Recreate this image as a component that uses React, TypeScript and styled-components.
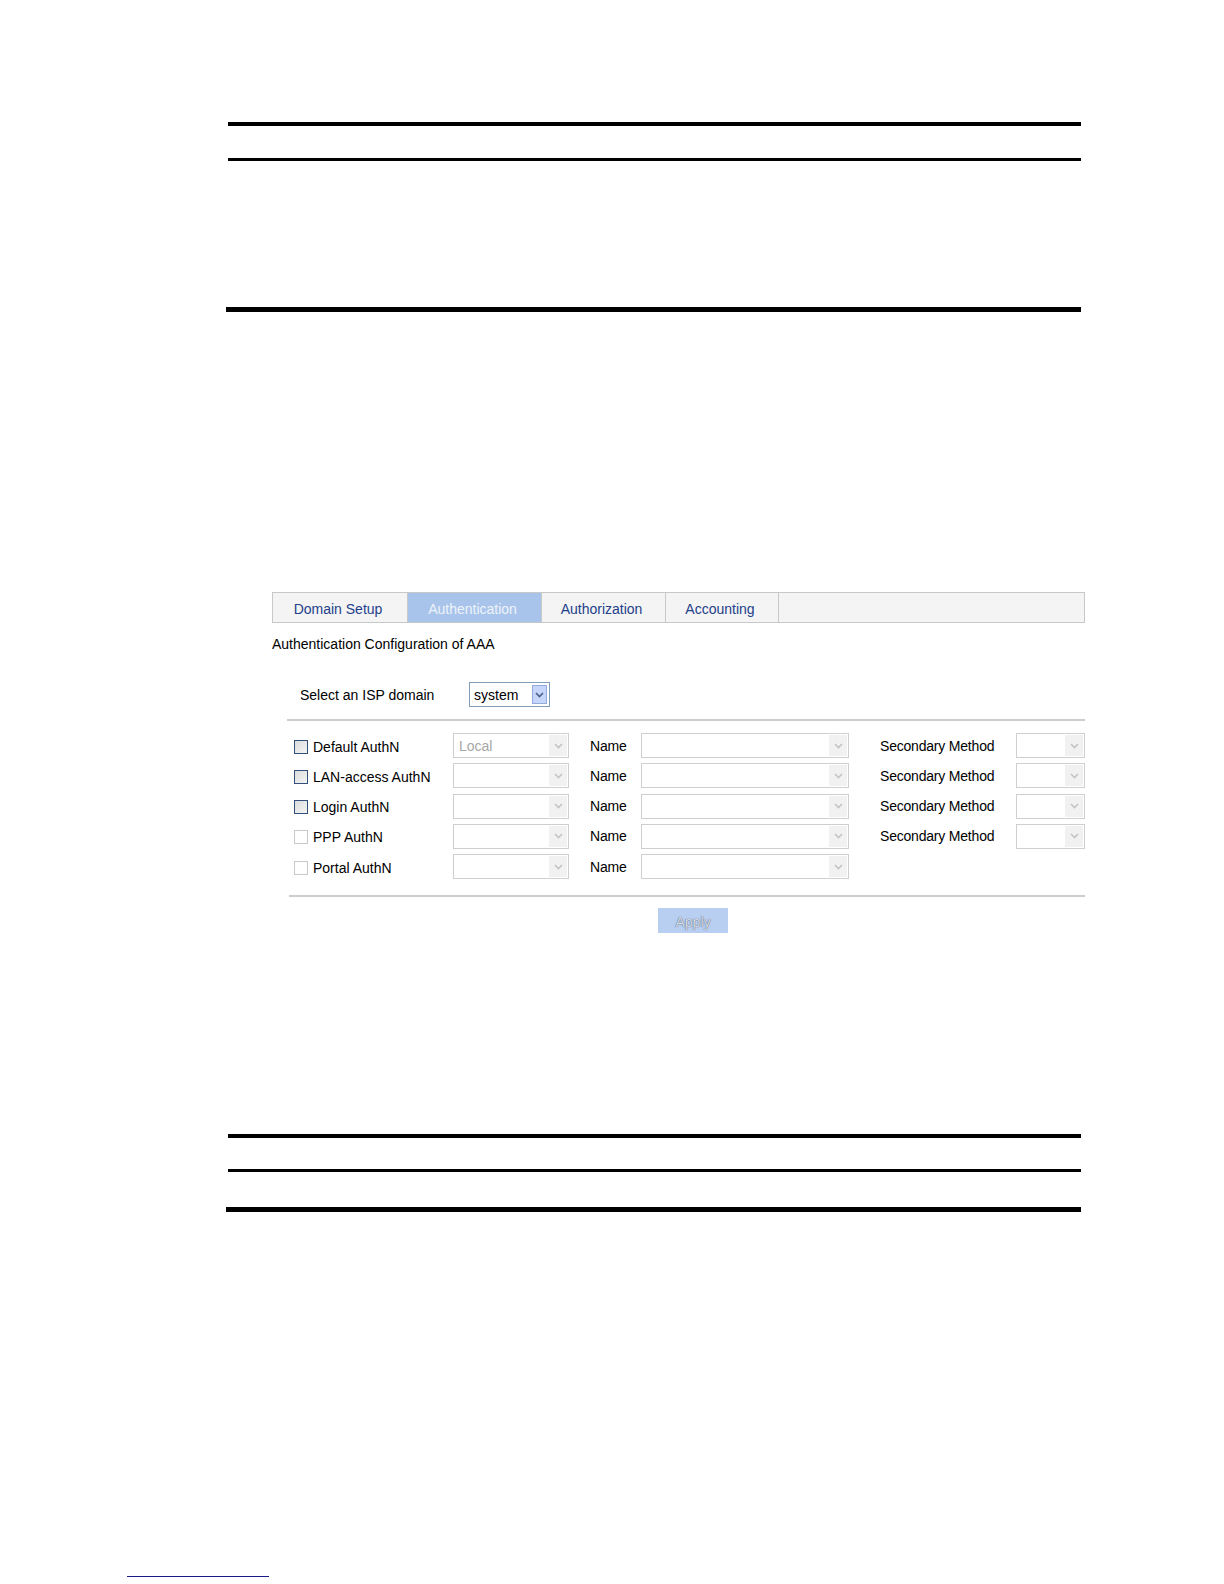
import { Fragment } from 'react';
import styled, { createGlobalStyle } from 'styled-components';

const GlobalStyle = createGlobalStyle`
  body {
    margin: 0;
    background: #ffffff;
    font-family: "Liberation Sans", Arial, sans-serif;
  }
`;

const Page = styled.div`
  width: 1224px;
  padding-top: 122px;
`;

const Rule = styled.div<{ $h: number; $top?: number; $left?: number; $width?: number }>`
  height: ${(p) => p.$h}px;
  background: #000000;
  margin-top: ${(p) => p.$top || 0}px;
  margin-left: ${(p) => p.$left || 228}px;
  width: ${(p) => p.$width || 853}px;
`;

const Panel = styled.div`
  margin: 280px 0 0 272px;
  width: 813px;
  font-size: 14px;
  color: #000000;
`;

const TabBar = styled.div`
  display: flex;
  height: 29px;
  border: 1px solid #c8c8c8;
  background: #f4f4f4;
`;

const Tab = styled.div<{ $width?: number; $active?: boolean }>`
  width: ${(p) => (p.$width ? `${p.$width}px` : 'auto')};
  flex: ${(p) => (p.$width ? '0 0 auto' : '1')};
  border-right: ${(p) => (p.$width ? '1px solid #c8c8c8' : 'none')};
  background: ${(p) => (p.$active ? '#a9c4ea' : 'transparent')};
  color: ${(p) => (p.$active ? '#eef3fb' : '#23418a')};
  display: flex;
  align-items: center;
  justify-content: center;
  padding: 3px 4px 0 0;
  box-sizing: border-box;
`;

const Caption = styled.div`
  margin-top: 13px;
  line-height: 16px;
`;

const DomainRow = styled.div`
  display: flex;
  align-items: center;
  margin-top: 30px;
  padding-left: 28px;
`;

const DomainLabel = styled.span`
  width: 169px;
`;

const DomainSelect = styled.div`
  width: 81px;
  height: 25px;
  box-sizing: border-box;
  border: 1px solid #7f9db9;
  display: flex;
  align-items: center;
  justify-content: space-between;
  padding: 2px 2px 2px 4px;
  background: #ffffff;
`;

const DomainArrow = styled.div`
  width: 15px;
  height: 19px;
  box-sizing: border-box;
  border: 1px solid #92abdc;
  background: #c5d6fa;
  display: flex;
  align-items: center;
  justify-content: center;
`;

const FormBlock = styled.div`
  margin: 12px 0 0 15px;
  border-top: 2px solid #cdcdcd;
  padding: 12px 0 0 7px;
`;

const MethodGrid = styled.div`
  display: grid;
  grid-template-columns: 159px 116px 72px 208px 167px 69px;
  row-gap: 5.3px;
  align-items: center;
`;

const CheckLabel = styled.label`
  display: flex;
  align-items: center;
  gap: 5px;
  padding-top: 2px;
`;

const Box = styled.span<{ $enabled?: boolean }>`
  width: 14px;
  height: 14px;
  box-sizing: border-box;
  border: 1px solid ${(p) => (p.$enabled ? '#33507a' : '#c9c9c9')};
  background: ${(p) => (p.$enabled ? 'linear-gradient(135deg, #dcdcdc, #f4f4f4)' : '#ffffff')};
`;

const FieldLabel = styled.span<{ $pad: number }>`
  padding-left: ${(p) => p.$pad}px;
  letter-spacing: -0.2px;
`;

const Select = styled.div`
  height: 25px;
  box-sizing: border-box;
  border: 1px solid #cfcfcf;
  background: #ffffff;
  display: flex;
  align-items: stretch;
  justify-content: space-between;
`;

const SelectValue = styled.span`
  color: #a6a6a6;
  padding-left: 5px;
  display: flex;
  align-items: center;
  font-size: 14px;
`;

const SelectArrow = styled.span`
  width: 18px;
  margin: 1px;
  background: #f1f1f1;
  display: flex;
  align-items: center;
  justify-content: center;
`;

const Spacer = styled.span``;

const FormFooter = styled.div`
  margin: 16px 0 0 17px;
  border-top: 2px solid #cdcdcd;
  padding: 11px 0 0 369px;
`;

const ApplyButton = styled.button`
  width: 70px;
  height: 25px;
  border: none;
  background: #b9cff2;
  color: #d4dbe6;
  font-family: "Liberation Sans", Arial, sans-serif;
  font-size: 14px;
  text-shadow: 0 0 1px #66728a, 0 0 1px #66728a;
  padding: 3px 0 0;
`;

const FooterLink = styled.div`
  margin: 364px 0 0 127px;
  width: 142px;
  height: 1px;
  background: #1b1b8a;
`;

const Chevron = ({ color }: { color: string }) => (
  <svg width="9" height="6" viewBox="0 0 9 6">
    <polyline points="1,1 4.5,4.5 8,1" fill="none" stroke={color} strokeWidth="1.6" />
  </svg>
);

const DisabledSelect = ({ value }: { value?: string }) => (
  <Select>
    <SelectValue>{value}</SelectValue>
    <SelectArrow>
      <Chevron color="#c4c4c4" />
    </SelectArrow>
  </Select>
);

const methods = [
  { label: 'Default AuthN', enabled: true, value: 'Local', secondary: true },
  { label: 'LAN-access AuthN', enabled: true, secondary: true },
  { label: 'Login AuthN', enabled: true, secondary: true },
  { label: 'PPP AuthN', enabled: false, secondary: true },
  { label: 'Portal AuthN', enabled: false, secondary: false },
];

export default function App() {
  return (
    <Page>
      <GlobalStyle />
      <Rule $h={4} />
      <Rule $h={3} $top={32} />
      <Rule $h={5} $top={146} $left={226} $width={855} />

      <Panel>
        <TabBar>
          <Tab $width={135}>Domain Setup</Tab>
          <Tab $width={134} $active>
            Authentication
          </Tab>
          <Tab $width={124}>Authorization</Tab>
          <Tab $width={113}>Accounting</Tab>
          <Tab />
        </TabBar>
        <Caption>Authentication Configuration of AAA</Caption>

        <DomainRow>
          <DomainLabel>Select an ISP domain</DomainLabel>
          <DomainSelect>
            <span>system</span>
            <DomainArrow>
              <Chevron color="#4a5f8c" />
            </DomainArrow>
          </DomainSelect>
        </DomainRow>

        <FormBlock>
          <MethodGrid>
            {methods.map((m) => (
              <Fragment key={m.label}>
                <CheckLabel>
                  <Box $enabled={m.enabled} />
                  {m.label}
                </CheckLabel>
                <DisabledSelect value={m.value} />
                <FieldLabel $pad={21}>Name</FieldLabel>
                <DisabledSelect />
                {m.secondary ? <FieldLabel $pad={31}>Secondary Method</FieldLabel> : <Spacer />}
                {m.secondary ? <DisabledSelect /> : <Spacer />}
              </Fragment>
            ))}
          </MethodGrid>
        </FormBlock>

        <FormFooter>
          <ApplyButton>Apply</ApplyButton>
        </FormFooter>
      </Panel>

      <Rule $h={4} $top={201} />
      <Rule $h={3} $top={31} />
      <Rule $h={5} $top={35} $left={226} $width={855} />

      <FooterLink />
    </Page>
  );
}
